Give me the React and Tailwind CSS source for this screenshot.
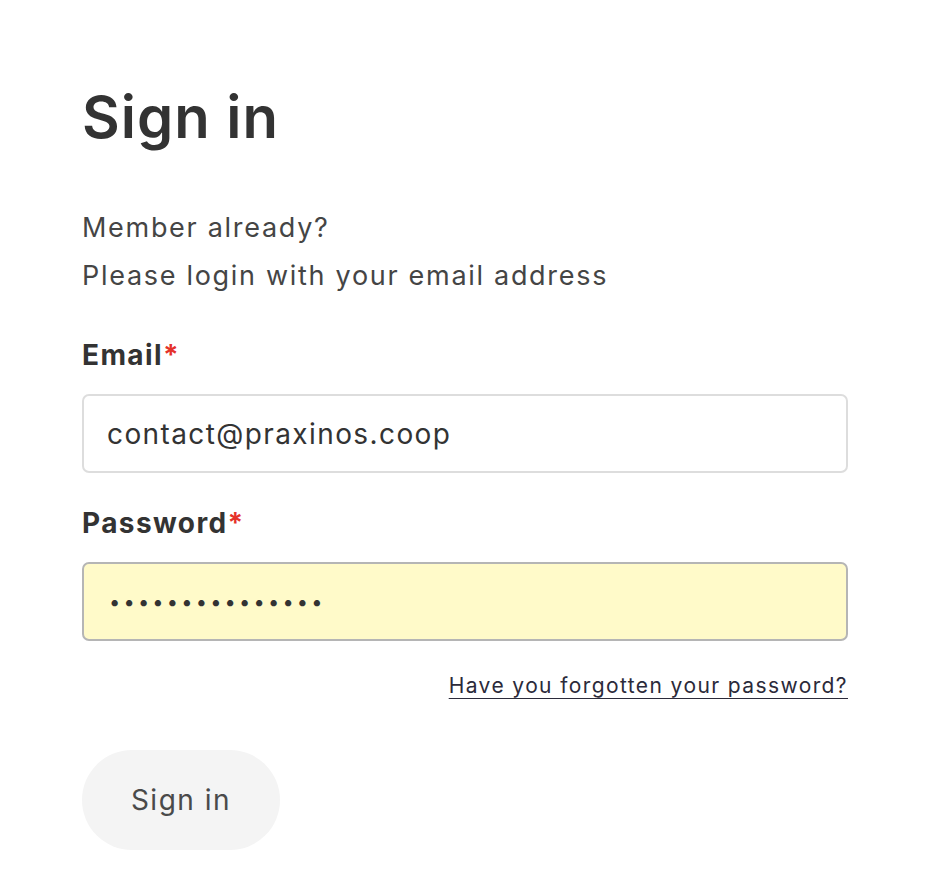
import React from "react";

export default function App() {
  return (
    <div className="min-h-[890px] bg-white pl-[82px] pr-[86px] pt-[82px]" style={{ fontFamily: "Inter, 'Noto Sans', sans-serif" }}>
      <h1 className="text-[58px] font-semibold leading-[70px] text-[#333333] tracking-[1px]">Sign in</h1>
      <div className="mt-[52px] text-[27px] leading-[48px] tracking-[1.7px] text-[#454545]">
        <p>Member already?</p>
        <p>Please login with your email address</p>
      </div>
      <label className="mt-[31px] block text-[28px] font-bold leading-[48px] tracking-[1.4px] text-[#333333]">
        Email<span className="text-[#e5322a]">*</span>
      </label>
      <input
        readOnly
        value="contact@praxinos.coop"
        className="mt-[15px] block h-[79px] w-full rounded-[7px] border-2 border-[#dddddd] bg-white px-[23px] text-[28px] tracking-[1.4px] text-[#333333] outline-none"
      />
      <label className="mt-[26px] block text-[28px] font-bold leading-[48px] tracking-[1.4px] text-[#333333]">
        Password<span className="text-[#e5322a]">*</span>
      </label>
      <input
        readOnly
        type="password"
        value="passwordpasswor"
        className="mt-[15px] block h-[79px] w-full rounded-[7px] border-2 border-[#b5b5b5] bg-[#fffac9] px-[25px] text-[20px] tracking-[3.2px] text-[#333333] outline-none"
      />
      <div className="mt-[29px] flex justify-end">
        <a href="#" className="text-[21px] leading-[32px] tracking-[1.4px] text-[#2b2a3a] underline underline-offset-[5px] decoration-1">
          Have you forgotten your password?
        </a>
      </div>
      <button className="mt-[48px] h-[100px] w-[198px] rounded-full bg-[#f4f4f4] text-[28px] tracking-[1.5px] text-[#4a4a4a]">
        Sign in
      </button>
    </div>
  );
}
